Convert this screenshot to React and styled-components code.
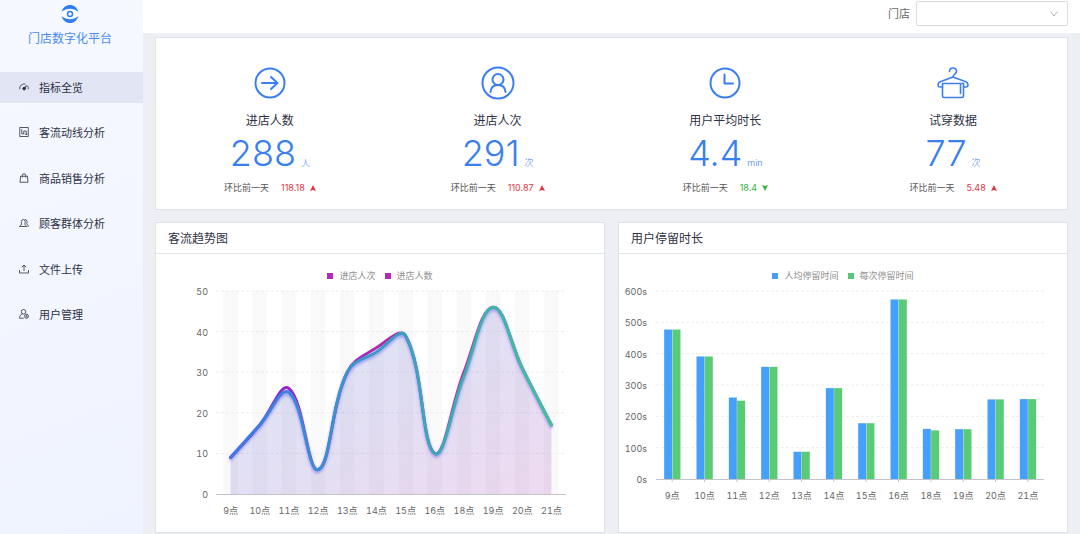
import React from 'react'
import styled, { createGlobalStyle } from 'styled-components'

const hours = ['9点', '10点', '11点', '12点', '13点', '14点', '15点', '16点', '18点', '19点', '20点', '21点']
const visits = [9, 17, 26, 6, 30, 36, 39, 10, 30, 46, 31, 17]
const visitors = [9, 17, 25, 6, 30, 35, 39, 10, 29, 46, 31, 17]
const perPerson = [477, 391, 260, 358, 87, 290, 178, 573, 160, 159, 254, 255]
const perVisit = [477, 391, 250, 358, 87, 290, 178, 573, 155, 159, 254, 255]

/* ---------- icons ---------- */

const MenuIcon = ({ children }) => (
  <MenuSvg viewBox="0 0 20 20" aria-hidden="true">{children}</MenuSvg>
)

const GaugeIcon = () => (
  <MenuIcon>
    <path d="M1.5 14.5A8.800 8.800 0 0 1 13 4.500M17 7.500a8.800 8.800 0 0 1 1.500 7" />
    <circle cx="10.300" cy="13.200" r="2.800" fill="currentColor" />
    <path d="M11 12.500l4-5.500" strokeWidth="2.2" />
  </MenuIcon>
)

const RouteIcon = () => (
  <MenuIcon>
    <path d="M1.500 1h17v18h-17zM5.500 4.500v9h4M9.500 14.500V8h5v8M12.500 13.500l2 2.500 2-2.500" />
  </MenuIcon>
)

const BagIcon = () => (
  <MenuIcon>
    <path d="M3 6.500h14l1 12H2zM6.500 9V5a3.500 3.500 0 0 1 7 0v4" />
  </MenuIcon>
)

const GroupIcon = () => (
  <MenuIcon>
    <path d="M1 17c0-3 4.500-2 4.500-5-1.500-2-1.500-9 3-9s4.500 7 3 9c0 3 3.500 2 3.500 5zM11.500 3c5-.500 5.500 5.500 4 8 0 2.500 3 2 3 5M17 17h2" />
  </MenuIcon>
)

const UploadIcon = () => (
  <MenuIcon>
    <path d="M10 14V2M5.500 6.500L10 2l4.500 4.500M1 12v6h18v-6" />
  </MenuIcon>
)

const UserCogIcon = () => (
  <MenuIcon>
    <circle cx="9" cy="5.500" r="4.500" />
    <path d="M9.500 18.500H1c0-5 2.300-7.500 6.300-8.700" />
    <circle cx="15" cy="14.500" r="4" />
    <circle cx="15" cy="14.500" r="1.300" />
  </MenuIcon>
)

const Logo = () => (
  <LogoSvg viewBox="0 0 36 36" aria-hidden="true">
    <path d="M1 13.500C4 5 10 0 18 0s14 5 17 13.500C29.500 9.500 24 7.500 18 7.500S6.500 9.500 1 13.500z" />
    <path d="M1 22.500C4 31 10 36 18 36s14-5 17-13.500c-5.500 4-11 6-17 6s-11.500-2-17-6z" />
    <path d="M1 18c5-5 10.500-7.500 17-7.500S30 13 35 18c-5 5-10.500 7.500-17 7.500S6 23 1 18z" fill="#fff" />
    <circle cx="18" cy="18" r="5" fill="none" stroke="#2f7df0" strokeWidth="3" />
  </LogoSvg>
)

const EnterIcon = () => (
  <StatSvg viewBox="0 0 34 34" aria-hidden="true">
    <circle cx="17" cy="17" r="14.500" />
    <path d="M9 17h15.500M18 11l6.500 6-6.500 6" />
  </StatSvg>
)

const PersonIcon = () => (
  <StatSvg viewBox="0 0 34 34" aria-hidden="true">
    <circle cx="17" cy="17" r="15.500" />
    <circle cx="17" cy="13.500" r="5.500" />
    <path d="M9.500 26c.3-4.500 3.200-7 7.500-7s7.200 2.500 7.500 7" />
  </StatSvg>
)

const ClockIcon = () => (
  <StatSvg viewBox="0 0 34 34" aria-hidden="true">
    <circle cx="17" cy="17" r="14.500" />
    <path d="M16.500 8.500v9h8.500" />
  </StatSvg>
)

const HangerIcon = () => (
  <StatSvg viewBox="0 0 34 34" aria-hidden="true" $thin>
    <path d="M13.500 5.500c0-4.700 7-4.700 7 0 0 2.800-3.500 2.500-3.500 5.500" />
    <path d="M6.500 21H4c-1.300 0-2-.8-2-2 0-1.700.8-2.700 2.200-3.200L17 11l12.800 4.800c1.400.5 2.200 1.500 2.200 3.200 0 1.200-.7 2-2 2h-2.500" />
    <path d="M6.500 17.500h21V30a1.500 1.500 0 0 1-1.500 1.500H8A1.500 1.500 0 0 1 6.500 30zM24.500 19v8.500" />
  </StatSvg>
)

/* ---------- data for the page ---------- */

const menu = [
  { label: '指标全览', Icon: GaugeIcon, active: true },
  { label: '客流动线分析', Icon: RouteIcon },
  { label: '商品销售分析', Icon: BagIcon },
  { label: '顾客群体分析', Icon: GroupIcon },
  { label: '文件上传', Icon: UploadIcon },
  { label: '用户管理', Icon: UserCogIcon },
]

const stats = [
  { label: '进店人数', value: '288', unit: '人', diff: '118.18', up: true, Icon: EnterIcon },
  { label: '进店人次', value: '291', unit: '次', diff: '110.87', up: true, Icon: PersonIcon },
  { label: '用户平均时长', value: '4.4', unit: 'min', diff: '18.4', up: false, Icon: ClockIcon },
  { label: '试穿数据', value: '77', unit: '次', diff: '5.48', up: true, Icon: HangerIcon },
]

/* ---------- charts ---------- */

// cubic path through the points, handles weighted by the length of each segment
const smoothPath = (pts, smooth = 0.4) => {
  let d = `M${pts[0][0]} ${pts[0][1]}`
  let out = pts[0]
  for (let i = 1; i < pts.length; i++) {
    const prev = pts[i - 1]
    const p = pts[i]
    const next = pts[i + 1]
    let into = p
    let leave = p
    if (next) {
      const a = Math.hypot(p[0] - prev[0], p[1] - prev[1])
      const b = Math.hypot(next[0] - p[0], next[1] - p[1])
      into = p.map((v, k) => v - (next[k] - prev[k]) * smooth * (a / (a + b)))
      leave = p.map((v, k) => v + (next[k] - prev[k]) * smooth * (b / (a + b)))
    }
    d += `C${out[0]} ${out[1]} ${into[0]} ${into[1]} ${p[0]} ${p[1]}`
    out = leave
  }
  return d
}

const FlowChart = () => {
  const left = 60
  const right = 410
  const base = 212
  const top = 9
  const step = (right - left) / hours.length
  const x = i => left + step * (i + 0.5)
  const y = v => base - (v / 50) * (base - top)
  const upper = smoothPath(visits.map((v, i) => [x(i), y(v)]))
  const lower = smoothPath(visitors.map((v, i) => [x(i), y(v)]))

  return (
    <ChartSvg viewBox="0 0 448 250" role="img" aria-label="客流趋势图">
      <defs>
        <linearGradient id="purple" x1="0" x2="1">
          <stop offset="0" stopColor="#7a2be0" />
          <stop offset=".5" stopColor="#b82ab0" />
          <stop offset="1" stopColor="#c22a8c" />
        </linearGradient>
        <linearGradient id="teal" x1="0" x2="1">
          <stop offset="0" stopColor="#3f76ea" />
          <stop offset=".5" stopColor="#399fc4" />
          <stop offset="1" stopColor="#3ec49b" />
        </linearGradient>
        <linearGradient id="area" x1="0" y1="0" x2="1" y2="1">
          <stop offset="0" stopColor="#6f8fd8" stopOpacity=".22" />
          <stop offset=".45" stopColor="#7f78d0" stopOpacity=".23" />
          <stop offset="1" stopColor="#b865c4" stopOpacity=".24" />
        </linearGradient>
        <filter id="glow" x="-5%" y="-5%" width="110%" height="115%">
          <feDropShadow dx="0" dy="2" stdDeviation="1.5" floodColor="#5a55e8" floodOpacity=".55" />
        </filter>
      </defs>
      {hours.map((h, i) => (
        <rect key={h} x={x(i) - step / 4} y={top} width={step / 2} height={base - top} fill="#f9f9f9" />
      ))}
      {[10, 20, 30, 40, 50].map(v => <GridLine key={v} x1={left} x2={right} y1={y(v)} y2={y(v)} />)}
      <AxisLine x1={left} x2={right} y1={base + 0.5} y2={base + 0.5} />
      <path d={`${lower}L${x(11)} ${base}L${x(0)} ${base}Z`} fill="url(#area)" />
      <Curve d={upper} stroke="url(#purple)" />
      <Curve d={lower} stroke="url(#teal)" filter="url(#glow)" />
      {[0, 10, 20, 30, 40, 50].map(v => (
        <AxisText key={v} x={left - 8} y={y(v) + 4} textAnchor="end">{v}</AxisText>
      ))}
      {hours.map((h, i) => <AxisText key={h} x={x(i)} y={base + 20} textAnchor="middle">{h}</AxisText>)}
    </ChartSvg>
  )
}

const StayChart = () => {
  const left = 37
  const right = 425
  const base = 197
  const top = 9
  const step = (right - left) / hours.length
  const x = i => left + step * (i + 0.5)
  const y = v => base - (v / 600) * (base - top)

  return (
    <ChartSvg viewBox="0 0 448 250" role="img" aria-label="用户停留时长">
      {[100, 200, 300, 400, 500, 600].map(v => <GridLine key={v} x1={left} x2={right} y1={y(v)} y2={y(v)} />)}
      <AxisLine x1={left} x2={right} y1={base + 0.5} y2={base + 0.5} />
      {hours.map((h, i) => (
        <g key={h}>
          <rect x={x(i) - 8} y={y(perPerson[i])} width="8" height={base - y(perPerson[i])} fill="#45a0fb" />
          <rect x={x(i) + 0.3} y={y(perVisit[i])} width="8" height={base - y(perVisit[i])} fill="#59cb77" />
          <AxisLine x1={x(i)} x2={x(i)} y1={base} y2={base + 3} />
          <AxisText x={x(i)} y={base + 20} textAnchor="middle">{h}</AxisText>
        </g>
      ))}
      {[0, 100, 200, 300, 400, 500, 600].map(v => (
        <AxisText key={v} x={left - 9} y={y(v) + 4} textAnchor="end">{v}s</AxisText>
      ))}
    </ChartSvg>
  )
}

/* ---------- page ---------- */

const App = () => {
  return (
    <>
      <GlobalStyle />
      <Page>
        <Sidebar>
          <Brand>
            <Logo />
            <BrandName>门店数字化平台</BrandName>
          </Brand>
          <Menu>
            {menu.map(({ label, Icon, active }) => (
              <li key={label}>
                <MenuLink href="#" $active={active}><Icon />{label}</MenuLink>
              </li>
            ))}
          </Menu>
        </Sidebar>

        <Content>
          <Header>
            <StoreLabel htmlFor="store">门店</StoreLabel>
            <SelectWrapper>
              <StoreSelect id="store" defaultValue=""><option value="" /></StoreSelect>
              <Chevron viewBox="0 0 8 6" aria-hidden="true"><path d="M.5.500L4 5 7.500.500" /></Chevron>
            </SelectWrapper>
          </Header>

          <Main>
            <StatsCard>
              {stats.map(({ label, value, unit, diff, up, Icon }) => (
                <Stat key={label}>
                  <Icon />
                  <StatLabel>{label}</StatLabel>
                  <StatValue>{value}<Unit>{unit}</Unit></StatValue>
                  <Compare>
                    环比前一天
                    <Diff $up={up}>
                      {diff}
                      <Arrow viewBox="0 0 6 6" $up={up} aria-hidden="true"><path d="M3 0l3 6-3-1-3 1z" /></Arrow>
                    </Diff>
                  </Compare>
                </Stat>
              ))}
            </StatsCard>

            <Charts>
              <Card>
                <CardTitle>客流趋势图</CardTitle>
                <Legend>
                  <LegendItem $color="linear-gradient(90deg, #9a35c5, #cc22aa)">进店人次</LegendItem>
                  <LegendItem $color="linear-gradient(90deg, #9a35c5, #cc22aa)">进店人数</LegendItem>
                </Legend>
                <FlowChart />
              </Card>
              <Card>
                <CardTitle>用户停留时长</CardTitle>
                <Legend>
                  <LegendItem $color="#4a9df5">人均停留时间</LegendItem>
                  <LegendItem $color="#5ac67b">每次停留时间</LegendItem>
                </Legend>
                <StayChart />
              </Card>
            </Charts>
          </Main>
        </Content>
      </Page>
    </>
  )
}

const GlobalStyle = createGlobalStyle`
  * {
    box-sizing: border-box;
  }
  body {
    margin: 0;
    background: #eeeff4;
    color: #2e3145;
    font-family: Inter, "Noto Sans CJK SC", sans-serif;
    font-size: 12px;
  }
`
const Page = styled.div`
  display: flex;
  min-height: 100vh;
`
const Sidebar = styled.nav`
  flex: 0 0 143px;
  padding-top: 5px;
  background: linear-gradient(160deg, #f6f9ff, #eff3ff);
`
const Brand = styled.div`
  display: flex;
  flex-direction: column;
  align-items: center;
  gap: 8px;
  padding-right: 3px;
`
const LogoSvg = styled.svg`
  width: 18px;
  height: 18px;
  fill: #2f7df0;
`
const BrandName = styled.div`
  line-height: 16px;
  color: #4a8af0;
`
const Menu = styled.ul`
  display: flex;
  flex-direction: column;
  justify-content: space-between;
  height: 259px;
  margin: 25px 0 0;
  padding: 0;
  list-style: none;
`
const MenuLink = styled.a`
  display: flex;
  align-items: center;
  gap: 10px;
  height: 31px;
  padding: 0 0 2px 19px;
  background: ${props => (props.$active ? '#e2e6f4' : 'transparent')};
  color: #2e3145;
  font-size: 11px;
  text-decoration: none;
`
const MenuSvg = styled.svg`
  width: 10px;
  height: 10px;
  fill: none;
  stroke: currentColor;
  stroke-width: 1.6;
`
const Content = styled.div`
  flex: 1;
  min-width: 0;
`
const Header = styled.header`
  display: flex;
  justify-content: flex-end;
  align-items: flex-start;
  gap: 6px;
  height: 33px;
  padding: 1px 12px 0;
  background: #fff;
`
const StoreLabel = styled.label`
  line-height: 26px;
  font-size: 11px;
  color: #666;
`
const SelectWrapper = styled.div`
  position: relative;
  width: 152px;
`
const StoreSelect = styled.select`
  display: block;
  width: 100%;
  height: 25px;
  border: 1px solid #dcdcde;
  border-radius: 2px;
  background: #fff;
  appearance: none;
`
const Chevron = styled.svg`
  position: absolute;
  top: 10px;
  right: 10px;
  width: 8px;
  height: 6px;
  fill: none;
  stroke: #b5b5b8;
  pointer-events: none;
`
const Main = styled.main`
  display: flex;
  flex-direction: column;
  gap: 12px;
  padding: 4px 12px 0;
`
const Card = styled.section`
  border: 1px solid #dfe2ea;
  background: #fff;
`
const StatsCard = styled(Card)`
  display: grid;
  grid-template-columns: repeat(4, 1fr);
  padding: 28px 0 15px;
`
const Stat = styled.div`
  display: flex;
  flex-direction: column;
  align-items: center;
`
const StatSvg = styled.svg`
  width: 34px;
  height: 34px;
  fill: none;
  stroke: #3a7ff0;
  stroke-width: ${props => (props.$thin ? '1.6' : '2')};
  stroke-linecap: round;
  stroke-linejoin: round;
`
const StatLabel = styled.div`
  margin-top: 13px;
  line-height: 16px;
`
const StatValue = styled.div`
  display: flex;
  align-items: baseline;
  gap: 5px;
  height: 36px;
  margin-top: 6px;
  line-height: 36px;
  font-size: 36px;
  font-weight: 300;
  color: #3a7ff0;
`
const Unit = styled.span`
  line-height: 12px;
  font-size: 9px;
`
const Compare = styled.div`
  display: flex;
  gap: 12px;
  margin-top: 11px;
  line-height: 12px;
  font-size: 9px;
  color: #555;
`
const Diff = styled.span`
  display: flex;
  align-items: center;
  gap: 5px;
  color: ${props => (props.$up ? '#e0353f' : '#35b53a')};
`
const Arrow = styled.svg`
  width: 6px;
  height: 6px;
  fill: currentColor;
  transform: ${props => (props.$up ? 'none' : 'rotate(180deg)')};
`
const Charts = styled.div`
  display: grid;
  grid-template-columns: 1fr 1fr;
  gap: 13px;
`
const CardTitle = styled.h2`
  margin: 0;
  padding: 1px 12px 0;
  border-bottom: 1px solid #dfe2ea;
  line-height: 29px;
  font-size: 12px;
  font-weight: 400;
`
const Legend = styled.ul`
  display: flex;
  justify-content: center;
  gap: 9px;
  margin: 0;
  padding: 16px 0 0;
  list-style: none;
`
const LegendItem = styled.li`
  display: flex;
  align-items: center;
  gap: 6px;
  line-height: 12px;
  font-size: 9px;
  color: #909090;

  &::before {
    content: '';
    width: 6px;
    height: 6px;
    background: ${props => props.$color};
  }
`
const ChartSvg = styled.svg`
  display: block;
  width: 100%;
`
const GridLine = styled.line`
  stroke: #ececec;
  stroke-dasharray: 3 2;
`
const AxisLine = styled.line`
  stroke: #c4c4c8;
`
const AxisText = styled.text`
  font-size: 9px;
  font-variant-numeric: tabular-nums;
  fill: #666;
`
const Curve = styled.path`
  fill: none;
  stroke-width: 3;
  stroke-linecap: round;
`

export default App
